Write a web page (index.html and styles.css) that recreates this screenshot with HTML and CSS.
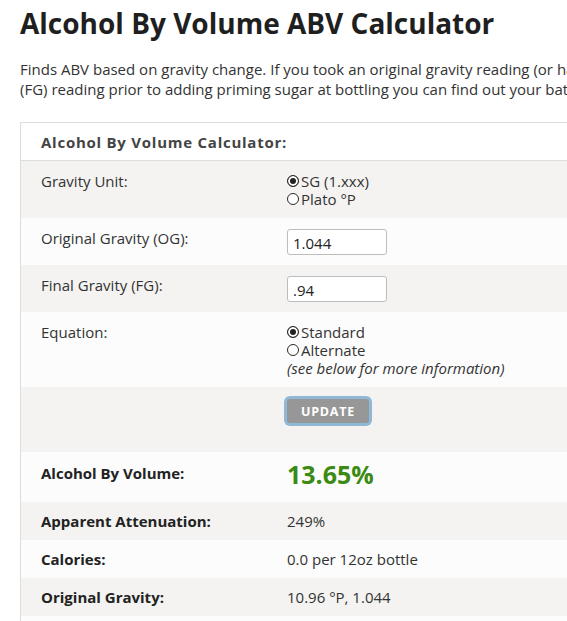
FILE: index.html
```html
<!DOCTYPE html>
<html>
<head>
<meta charset="utf-8">
<link rel="stylesheet" href="styles.css">
<title>Alcohol By Volume ABV Calculator</title>
</head>
<body>
<div class="page">
  <h1 class="title">Alcohol By Volume ABV Calculator</h1>
  <p class="intro">Finds ABV based on gravity change. If you took an original gravity reading (or have a recipe that calculates it) and a final gravity<br>(FG) reading prior to adding priming sugar at bottling you can find out your batch's alcohol by volume.</p>

  <div class="calc">
    <div class="calc-head">Alcohol By Volume Calculator:</div>

    <div class="row alt">
      <div class="label">Gravity Unit:</div>
      <div class="value">
        <label class="opt"><input type="radio" name="unit" checked><span>SG (1.xxx)</span></label>
        <label class="opt"><input type="radio" name="unit"><span>Plato °P</span></label>
      </div>
    </div>

    <div class="row">
      <div class="label">Original Gravity (OG):</div>
      <div class="value"><input class="field" type="text" value="1.044"></div>
    </div>

    <div class="row alt">
      <div class="label">Final Gravity (FG):</div>
      <div class="value"><input class="field" type="text" value=".94"></div>
    </div>

    <div class="row">
      <div class="label">Equation:</div>
      <div class="value">
        <label class="opt"><input type="radio" name="eq" checked><span>Standard</span></label>
        <label class="opt"><input type="radio" name="eq"><span>Alternate</span></label>
        <em class="note">(see below for more information)</em>
      </div>
    </div>

    <div class="row alt btn-row">
      <div class="label"></div>
      <div class="value"><button class="update" type="button">UPDATE</button></div>
    </div>

    <div class="row result abv-row">
      <div class="label">Alcohol By Volume:</div>
      <div class="value abv">13.65%</div>
    </div>

    <div class="row alt result">
      <div class="label">Apparent Attenuation:</div>
      <div class="value">249%</div>
    </div>

    <div class="row result">
      <div class="label">Calories:</div>
      <div class="value">0.0 per 12oz bottle</div>
    </div>

    <div class="row alt result">
      <div class="label">Original Gravity:</div>
      <div class="value">10.96 °P, 1.044</div>
    </div>

    <div class="row result">
      <div class="label">Final Gravity:</div>
      <div class="value">-4.33 °P, 0.940</div>
    </div>
  </div>
</div>
</body>
</html>
```

FILE: styles.css
```css
html, body {
  margin: 0;
  padding: 0;
  overflow: hidden;
  background: #fff;
}

body {
  font-family: "Open Sans", "DejaVu Sans", sans-serif;
  color: #333;
  font-size: 15px;
}

.page {
  width: 960px;
  padding: 0 0 0 20px;
}

.title {
  margin: 0;
  padding-top: 4px;
  font-size: 28px;
  line-height: 38px;
  font-weight: 700;
  color: #1f1f1f;
}

.intro {
  margin: 17px 0 0 0;
  font-size: 15px;
  line-height: 20px;
  color: #333;
  white-space: nowrap;
}

.calc {
  margin-top: 23px;
  border-top: 1px solid #ddd;
  border-left: 1px solid #ddd;
}

.calc-head {
  background: #fff;
  padding: 10px 20px 9px 20px;
  line-height: 18px;
  font-weight: 700;
  letter-spacing: 0.75px;
  color: #444;
  border-bottom: 1px solid #ddd;
}

.row {
  display: grid;
  grid-template-columns: 246px 1fr;
  padding: 11px 20px 10px 20px;
  background: #fcfcfc;
  line-height: 18px;
}

.row.alt {
  background: #f4f3f1;
}

.label {
  color: #333;
}

.value {
  display: flex;
  flex-direction: column;
  align-items: flex-start;
  color: #333;
}

.opt {
  display: flex;
  align-items: center;
  gap: 2px;
  height: 18px;
}

.opt input {
  appearance: none;
  -webkit-appearance: none;
  margin: 0;
  width: 12px;
  height: 12px;
  border: 1px solid #2a2a2a;
  border-radius: 50%;
  background: #fff;
}

.opt input:checked {
  background: #222;
  box-shadow: inset 0 0 0 2px #fff;
}

.note {
  font-style: italic;
}

.field {
  box-sizing: border-box;
  width: 100px;
  height: 26px;
  margin: 0;
  padding: 2px 5px 0 5px;
  border: 1px solid #bdbdbd;
  border-radius: 3px;
  background: #fff;
  font-family: inherit;
  font-size: 15px;
  color: #222;
}

.btn-row {
  padding-top: 12px;
  padding-bottom: 29px;
}

.update {
  box-sizing: border-box;
  width: 82px;
  height: 24px;
  margin: 0;
  padding: 0;
  border: none;
  border-radius: 3px;
  background: #979797;
  box-shadow: 0 0 0 3px #8fb8d6;
  color: #fff;
  font-family: inherit;
  font-weight: 700;
  font-size: 12.5px;
  letter-spacing: 0.8px;
}

.result {
  padding-top: 10px;
  padding-bottom: 10px;
}

.result .label {
  font-weight: 700;
  color: #222;
}

.abv-row {
  padding-top: 12px;
  padding-bottom: 18px;
}

.abv {
  font-size: 25px;
  line-height: 20px;
  font-weight: 700;
  color: #3b8a14;
}
```
